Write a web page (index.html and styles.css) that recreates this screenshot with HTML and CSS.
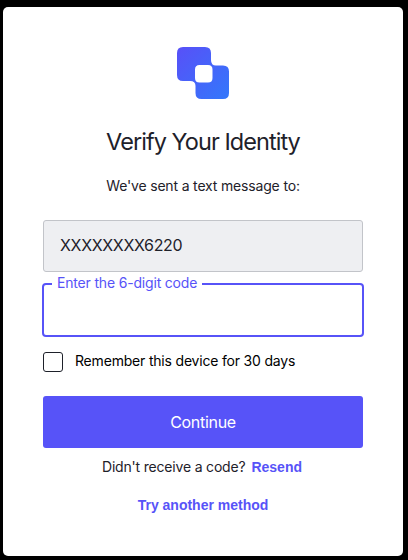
FILE: index.html
```html
<!DOCTYPE html>
<html lang="en">
<head>
<meta charset="utf-8">
<title>Verify Your Identity</title>
<link rel="stylesheet" href="styles.css">
</head>
<body>
<main class="card">
  <svg class="logo" viewBox="0 0 52 52" aria-hidden="true">
    <defs>
      <linearGradient id="brand" x1="0" y1="0" x2="1" y2="1">
        <stop offset="0" stop-color="#5850f8"/>
        <stop offset="1" stop-color="#3378fb"/>
      </linearGradient>
    </defs>
    <path fill="url(#brand)" fill-rule="evenodd" d="M6 0H28Q34 0 34 6V13Q34 18.500 39 18.500H46Q52 18.500 52 24.500V46Q52 52 46 52H24.500Q18.500 52 18.500 46V39Q18.500 34 13 34H6Q0 34 0 28V6Q0 0 6 0ZM22.500 18Q18 18 18 22.500V31Q18 35.500 22.500 35.500H31Q35.500 35.500 35.500 31V22.500Q35.500 18 31 18Z"/>
  </svg>
  <h1 class="title">Verify Your Identity</h1>
  <p class="message">We've sent a text message to:</p>
  <form class="form">
    <div class="phone">XXXXXXXX6220</div>
    <fieldset class="code">
      <legend class="code-label">Enter the 6-digit code</legend>
    </fieldset>
    <div class="remember"><span class="checkbox"></span><span class="remember-label">Remember this device for 30 days</span></div>
    <button class="continue" type="button">Continue</button>
  </form>
  <p class="resend"><span class="question">Didn't receive a code?</span><a class="link">Resend</a></p>
  <p class="another"><a class="link">Try another method</a></p>
</main>
</body>
</html>
```

FILE: styles.css
```css
* { box-sizing: border-box; }
body {
  margin: 0;
  height: 560px;
  padding: 7px 5px 4px 3px;
  overflow: hidden;
  background: #000;
  color: #1e212a;
  font-family: Inter, "Liberation Sans", sans-serif;
  font-size: 14px;
}
p, h1 { margin: 0; }
.card {
  display: flex;
  flex-direction: column;
  align-items: center;
  height: 549px;
  padding: 40px;
  border-radius: 5px;
  background: #fff;
}
.logo { display: block; width: 52px; height: 52px; flex: none; }
.title {
  margin-top: 27px;
  font-size: 23.5px;
  font-weight: 400;
  line-height: 32px;
  letter-spacing: -0.95px;
  white-space: nowrap;
}
.message { margin-top: 18px; line-height: 20px; letter-spacing: -0.17px; }
.form { width: 100%; margin-top: 24px; }
.phone {
  height: 52px;
  padding: 0 16px;
  border: 1px solid #c2c4c9;
  border-radius: 3px;
  background: #eeeff2;
  font-size: 16px;
  line-height: 48px;
  letter-spacing: -0.34px;
}
.code {
  height: 62px;
  margin: 3px -1px 0;
  padding: 0 8px;
  border: 2px solid #5753f8;
  border-radius: 4px;
}
.code-label {
  height: 18px;
  padding: 0 5px;
  color: #5753f8;
  line-height: 16px;
  letter-spacing: -0.18px;
}
.remember { display: flex; align-items: center; margin-top: 15px; height: 20px; color: #000; }
.checkbox { width: 20px; height: 20px; border: 1px solid #1e212a; border-radius: 3px; }
.remember-label { height: 20px; margin-left: 12px; line-height: 18px; letter-spacing: -0.19px; }
.continue {
  display: block;
  width: 100%;
  height: 52px;
  margin-top: 24px;
  padding: 0;
  border: 0;
  border-radius: 3px;
  background: #5753f8;
  color: #fff;
  font: 16px/52px Inter, sans-serif;
  letter-spacing: -0.3px;
}
.resend { display: flex; margin-top: 9px; padding-right: 2px; line-height: 20px; }
.question { margin-right: 6px; letter-spacing: -0.19px; }
.link { color: #5753f8; font-family: "Liberation Sans", sans-serif; font-weight: 700; }
.another { margin-top: 18px; line-height: 20px; }
```
